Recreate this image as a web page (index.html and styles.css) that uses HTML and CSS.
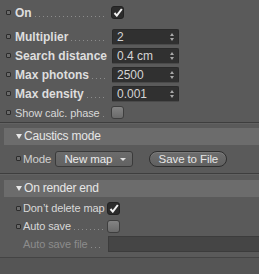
FILE: index.html
```html
<!DOCTYPE html>
<html lang="en">
<head>
    <meta charset="UTF-8">
    <title>Caustics</title>
    <link rel="stylesheet" href="styles.css">
</head>
<body>
<div class="panel">
    <div class="row top first">
        <div class="lab"><i class="key"></i><span class="b">On</span><span class="dots"></span></div>
        <span class="check on"><svg width="10" height="9" viewBox="0 0 10 9"><path d="M1.5 5 L3.8 7.6 L8.8 1" fill="none" stroke="#f2f2f2" stroke-width="2"/></svg></span>
    </div>
    <div class="row top">
        <div class="lab"><i class="key"></i><span class="b">Multiplier</span><span class="dots"></span></div>
        <div class="num">2<span class="spin"></span></div>
    </div>
    <div class="row top">
        <div class="lab"><i class="key"></i><span class="b">Search distance</span><span class="dots"></span></div>
        <div class="num">0.4 cm<span class="spin"></span></div>
    </div>
    <div class="row top">
        <div class="lab"><i class="key"></i><span class="b">Max photons</span><span class="dots"></span></div>
        <div class="num">2500<span class="spin"></span></div>
    </div>
    <div class="row top">
        <div class="lab"><i class="key"></i><span class="b">Max density</span><span class="dots"></span></div>
        <div class="num">0.001<span class="spin"></span></div>
    </div>
    <div class="row top">
        <div class="lab"><i class="key"></i><span class="t">Show calc. phase</span><span class="dots"></span></div>
        <span class="check off"></span>
    </div>

    <div class="sep"></div>
    <div class="head"><span class="arrow"></span>Caustics mode</div>
    <div class="row sub mode">
        <i class="key"></i><span class="t">Mode</span>
        <div class="drop">New map<span class="darrow"></span></div>
        <div class="btn">Save to File</div>
    </div>

    <div class="sep"></div>
    <div class="head head2"><span class="arrow"></span>On render end</div>
    <div class="row sub first-sub">
        <div class="lab"><i class="key"></i><span class="t">Don’t delete map</span><span class="dots"></span></div>
        <span class="check on"><svg width="10" height="9" viewBox="0 0 10 9"><path d="M1.5 5 L3.8 7.6 L8.8 1" fill="none" stroke="#f2f2f2" stroke-width="2"/></svg></span>
    </div>
    <div class="row sub">
        <div class="lab"><i class="key"></i><span class="t">Auto save</span><span class="dots"></span></div>
        <span class="check off"></span>
    </div>
    <div class="row sub dim">
        <div class="lab"><i class="key hidden"></i><span class="t">Auto save file</span><span class="dots"></span></div>
        <div class="path"></div>
    </div>
</div>
<div class="foot"></div>
</body>
</html>
```
FILE: styles.css
```css
body {
    margin: 0;
    width: 259px;
    height: 274px;
    overflow: hidden;
    background-color: #555;
    font-family: "Liberation Sans", Arial, sans-serif;
    font-size: 11px;
    letter-spacing: -0.1px;
    color: #d8d8d8;
}
.panel {
    background-color: #5a5a5a;
    padding-top: 3px;
    padding-bottom: 4px;
    border-bottom: 1px solid #444;
}
.row {
    display: flex;
    align-items: center;
    height: 19px;
}
.row.top {
    padding-left: 6px;
}
.row.first {
    margin-bottom: 5px;
}
.row.sub {
    padding-left: 16px;
    height: 18px;
}
.lab {
    display: flex;
    align-items: center;
    width: 102px;
    height: 100%;
    margin-right: 4px;
    white-space: nowrap;
    flex: none;
}
.sub .lab {
    width: 88px;
    margin-right: 3px;
}
.key {
    display: inline-block;
    width: 3px;
    height: 3px;
    border: 1px solid #2c2c2c;
    border-radius: 1px;
    background-color: #6a6a6a;
    margin-right: 4px;
    flex: none;
}
.sub .key {
    margin-right: 2px;
}
.key.hidden {
    visibility: hidden;
}
.b {
    font-weight: bold;
    font-size: 12px;
    letter-spacing: 0;
    color: #dedede;
    flex: none;
}
.t {
    flex: none;
}
.dots {
    flex: 1;
    min-width: 0;
    align-self: flex-end;
    height: 1px;
    margin: 0 1px 5px 3px;
    background-image: linear-gradient(to right, #8c8c8c 1px, transparent 1px);
    background-size: 4px 1px;
    background-repeat: repeat-x;
}
.check {
    width: 11px;
    height: 11px;
    margin-left: -1px;
    border-radius: 3px;
    display: flex;
    align-items: center;
    justify-content: center;
    flex: none;
}
.check.on {
    background-color: #2c2c2c;
    border: 1px solid #222;
}
.check.off {
    background: linear-gradient(#848484, #6a6a6a);
    border: 1px solid #3e3e3e;
}
.sub .check {
    margin-left: 0;
}
.num {
    position: relative;
    width: 61px;
    height: 14px;
    line-height: 14px;
    padding-left: 4px;
    background-color: #303030;
    border: 1px solid #2a2a2a;
    border-bottom-color: #4a4a4a;
    border-radius: 2px;
    color: #d4d4d4;
    font-size: 12px;
    letter-spacing: 0;
}
.spin {
    position: absolute;
    right: 4px;
    top: 3px;
    width: 0;
    height: 0;
    border-left: 2px solid transparent;
    border-right: 2px solid transparent;
    border-bottom: 3px solid #a8a8a8;
}
.spin::after {
    content: "";
    position: absolute;
    left: -2px;
    top: 5px;
    border-left: 2px solid transparent;
    border-right: 2px solid transparent;
    border-top: 3px solid #a8a8a8;
}
.sep {
    height: 1px;
    background-color: #3e3e3e;
    border-bottom: 1px solid #626262;
}
.head {
    margin: 4px 0 0 4px;
    height: 17px;
    line-height: 17px;
    padding-left: 12px;
    background-color: #6c6c6c;
    color: #e6e6e6;
    display: flex;
    align-items: center;
    font-size: 12px;
    letter-spacing: -0.2px;
}
.head2 {
    margin-top: 5px;
}
.arrow {
    width: 0;
    height: 0;
    border-left: 3px solid transparent;
    border-right: 3px solid transparent;
    border-top: 5px solid #e8e8e8;
    margin-right: 2px;
}
.row.mode {
    height: 19px;
    margin: 4px 0 5px;
    color: #d0d0d0;
}
.row.mode .t {
    font-size: 11.5px;
}
.drop {
    position: relative;
    margin-left: 4px;
    width: 68px;
    height: 14px;
    line-height: 14px;
    padding-left: 8px;
    background: linear-gradient(#6c6c6c, #626262);
    border: 1px solid #3a3a3a;
    border-radius: 3px;
    color: #ececec;
    font-size: 11.5px;
    flex: none;
}
.darrow {
    position: absolute;
    right: 6px;
    top: 6px;
    border-left: 3px solid transparent;
    border-right: 3px solid transparent;
    border-top: 3px solid #e0e0e0;
}
.btn {
    margin-left: 16px;
    width: 76px;
    height: 14px;
    line-height: 14px;
    text-align: center;
    background: linear-gradient(#6e6e6e, #606060);
    border: 1px solid #2e2e2e;
    box-shadow: inset 0 1px 0 #7c7c7c;
    border-radius: 8px;
    color: #e6e6e6;
    font-size: 11.5px;
    flex: none;
}
.row.first-sub {
    margin-top: 2px;
}
.dim {
    color: #8c8c8c;
}
.path {
    flex: 1;
    margin-left: 1px;
    height: 14px;
    background-color: #454545;
    border: 1px solid #3c3c3c;
    border-right: none;
}
.foot {
    height: 16px;
}
```
